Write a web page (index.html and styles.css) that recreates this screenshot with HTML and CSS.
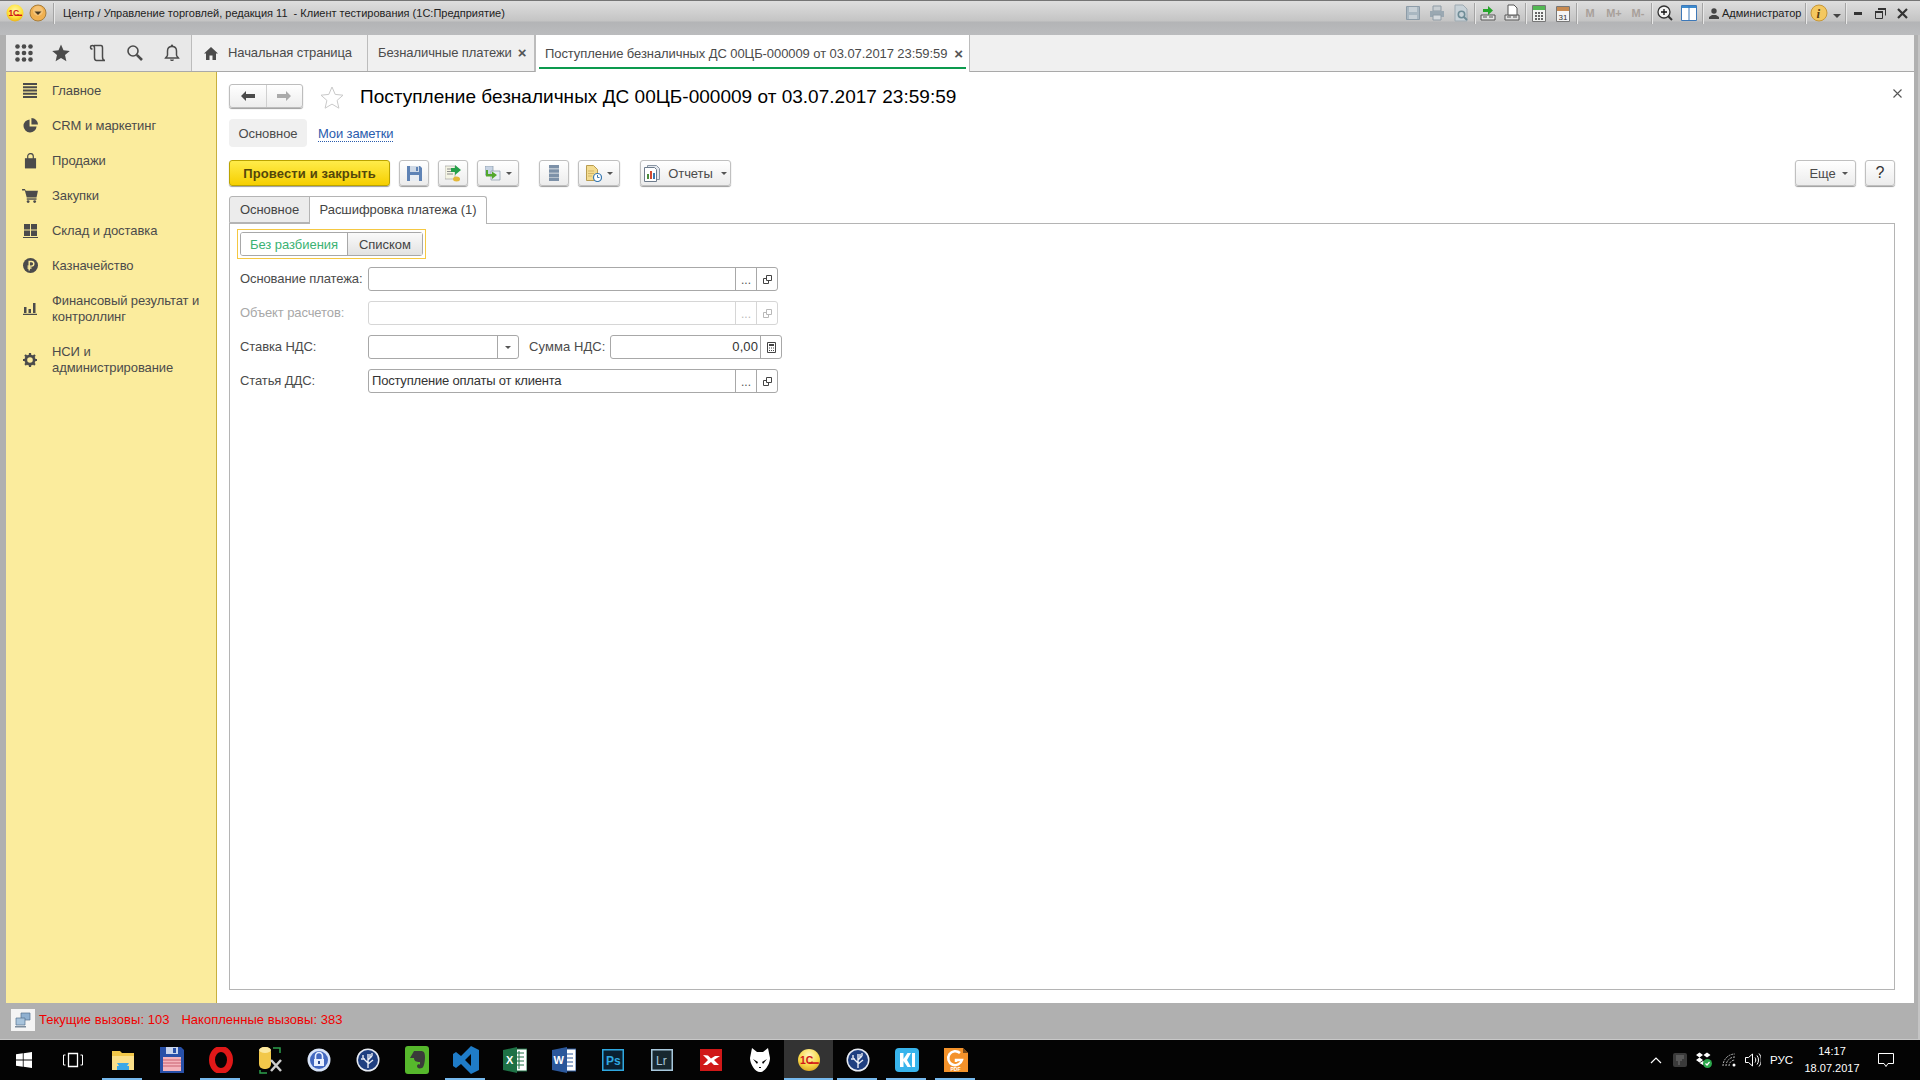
FILE: index.html
```html
<!DOCTYPE html>
<html lang="ru">
<head>
<meta charset="utf-8">
<title>Поступление безналичных ДС</title>
<link rel="stylesheet" href="styles.css">
</head>
<body>
<div class="app">
  <div class="window">
    <header class="titlebar">
      <div class="tb-left">
        <svg class="logo" width="18" height="18" viewBox="0 0 18 18"><defs><radialGradient id="lg" cx=".5" cy=".35" r=".7"><stop offset="0" stop-color="#fff7a8"/><stop offset=".6" stop-color="#ffe23a"/><stop offset="1" stop-color="#e8a810"/></radialGradient></defs><circle cx="9" cy="9" r="8.5" fill="url(#lg)"/><text x="2.4" y="12.2" class="logo-t">1С</text><rect x="9" y="10.6" width="7" height="1.4" fill="#d01818"/></svg>
        <svg class="menu-btn" width="18" height="18" viewBox="0 0 18 18"><circle cx="9" cy="9" r="8" fill="#f0b050" stroke="#a87e3c"/><circle cx="9" cy="7" r="5" fill="#f8d090" opacity=".6"/><path d="M5.5 7.5h7L9 11z" fill="#4a3a20"/></svg>
        <i class="tsep first"></i>
        <span class="win-title">Центр / Управление торговлей, редакция 11  - Клиент тестирования (1С:Предприятие)</span>
      </div>
      <div class="tb-right">
        <span class="ti"><svg width="16" height="16" viewBox="0 0 16 16"><path d="M1.500 1.500h13v13h-13z" fill="#a9b7c1" stroke="#8d9ca8"/><path d="M4 2h8v5H4zM4 10h8v4H4z" fill="#c8d0d6"/></svg></span>
        <span class="ti"><svg width="16" height="16" viewBox="0 0 16 16"><path d="M4 1h8v5H4z" fill="#c8ced2" stroke="#8f9ca6"/><path d="M1 6h14v6H1z" fill="#9aa8b2"/><path d="M4 10h8v5H4z" fill="#d5dade" stroke="#8f9ca6"/></svg></span>
        <span class="ti"><svg width="16" height="18" viewBox="0 0 16 18"><path d="M2 1h8l4 4v12H2z" fill="#c8d2d8" stroke="#9eaab2"/><circle cx="8.500" cy="10.500" r="3.200" fill="none" stroke="#6e8c96" stroke-width="1.600"/><path d="M11 13l3 3" stroke="#6e8c96" stroke-width="2"/></svg></span>
        <i class="tsep"></i>
        <span class="ti"><svg width="16" height="18" viewBox="0 0 16 18"><path d="M1 11h14v5H1z" fill="#e4e4e4" stroke="#555"/><path d="M3 13h4M9 13h4" stroke="#555"/><path d="M3 5h5V2l5 4.500L8 11V8H3z" fill="#27a52c"/></svg></span>
        <span class="ti"><svg width="16" height="18" viewBox="0 0 16 18"><path d="M1 11h14v5H1z" fill="#e4e4e4" stroke="#555"/><path d="M3 13h4M9 13h4" stroke="#555"/><path d="M4 1h6l3 3v7H4z" fill="#fff" stroke="#555"/></svg></span>
        <i class="tsep"></i>
        <span class="ti"><svg width="14" height="17" viewBox="0 0 14 17"><path d="M.5.500h13v16H.5z" fill="#f2f4f2" stroke="#777"/><path d="M1 1h12v4H1z" fill="#54b854"/><path d="M3 7h2v2H3zM6 7h2v2H6zM9 7h2v2H9zM3 10h2v2H3zM6 10h2v2H6zM9 10h2v2H9zM3 13h2v2H3zM6 13h2v2H6zM9 13h2v2H9z" fill="#666"/></svg></span>
        <span class="ti"><svg width="14" height="17" viewBox="0 0 14 17"><path d="M.5 1.500h13v15H.5z" fill="#f4f4f4" stroke="#777"/><path d="M1 2h12v4H1z" fill="#c88a50"/><text x="2.500" y="14.500" class="cal-t">31</text></svg></span>
        <i class="tsep"></i>
        <span class="ti m">M</span><span class="ti m">M+</span><span class="ti m">M-</span>
        <i class="tsep"></i>
        <span class="ti"><svg width="16" height="16" viewBox="0 0 16 16"><circle cx="7" cy="7" r="6" fill="#f4f4f4" stroke="#333" stroke-width="1.300"/><path d="M4 7h6M7 4v6" stroke="#111" stroke-width="1.300"/><path d="M11 11l4 4" stroke="#333" stroke-width="2"/></svg></span>
        <span class="ti"><svg width="16" height="16" viewBox="0 0 16 16"><path d="M.5.500h15v15H.5z" fill="#fff" stroke="#3d78b8"/><path d="M1 1h14v2H1z" fill="#3d8ccf"/><path d="M8 1v14" stroke="#3d78b8"/></svg></span>
        <i class="tsep gap"></i>
        <span class="user"><svg width="10" height="11" viewBox="0 0 10 11"><circle cx="5" cy="3" r="2.700" fill="#444"/><path d="M0 11V9l3-2h4l3 2v2z" fill="#444"/></svg>Администратор</span>
        <i class="tsep"></i>
        <span class="ti"><svg width="18" height="18" viewBox="0 0 18 18"><circle cx="9" cy="9" r="8" fill="#f4c860" stroke="#c89838"/><text x="6.500" y="14" class="info-t">i</text></svg></span>
        <svg class="tdrop" width="8" height="4" viewBox="0 0 8 4"><path d="M0 0h8L4 4z" fill="#444"/></svg>
        <i class="tsep short"></i>
        <span class="wb"><svg width="8" height="3" viewBox="0 0 8 3"><path d="M0 0h8v3H0z" fill="#333"/></svg></span>
        <span class="wb"><svg width="11" height="11" viewBox="0 0 11 11"><path d="M3 1h7.500v6.500M.500 3.500h7v7h-7z" fill="none" stroke="#333"/><path d="M3 0h8v2H3zM0 3h8v2H0z" fill="#333"/></svg></span>
        <span class="wb"><svg width="11" height="11" viewBox="0 0 11 11"><path d="M1 1l9 9M10 1l-9 9" stroke="#333" stroke-width="2.200"/></svg></span>
      </div>
    </header>

    <div class="frame">
      <nav class="tabsbar">
        <div class="tools">
          <svg class="t-grid" width="18" height="18" viewBox="0 0 18 18" fill="#4b4b4b"><circle cx="2.500" cy="2.500" r="2.300"/><circle cx="9" cy="2.500" r="2.300"/><circle cx="15.500" cy="2.500" r="2.300"/><circle cx="2.500" cy="9" r="2.300"/><circle cx="9" cy="9" r="2.300"/><circle cx="15.500" cy="9" r="2.300"/><circle cx="2.500" cy="15.500" r="2.300"/><circle cx="9" cy="15.500" r="2.300"/><circle cx="15.500" cy="15.500" r="2.300"/></svg>
          <svg width="18" height="18" viewBox="0 0 18 18"><path d="M9 .5l2.500 5.800 6.300.6-4.800 4.200 1.400 6.200L9 14l-5.400 3.300L5 11.100.2 6.900l6.300-.6z" fill="#4b4b4b"/></svg>
          <svg width="18" height="18" viewBox="0 0 18 18"><path d="M5 1.500h7c1.500 0 1.500 1 1.500 2.500v9c0 1.500.7 3.500 2.500 3.500H7.500C6 16.500 5.500 15 5.500 13.500V4C5.500 2.500 5 1.500 3.500 1.500 2 1.500 1.500 2.500 1.500 3.200 1.500 4 2.500 5 3.500 5" fill="none" stroke="#4b4b4b" stroke-width="1.500"/></svg>
          <svg width="18" height="18" viewBox="0 0 18 18"><circle cx="7" cy="7" r="5" fill="none" stroke="#4b4b4b" stroke-width="1.600"/><path d="M10.800 10.800l5.200 5.200" stroke="#4b4b4b" stroke-width="2.600"/></svg>
          <svg width="18" height="18" viewBox="0 0 18 18"><path d="M9 2.500c-3 0-4.500 2-4.500 4.500v4c0 1.500-1.500 2-2 3h13c-.5-1-2-1.500-2-3V7c0-2.500-1.500-4.500-4.500-4.500z" fill="none" stroke="#4b4b4b" stroke-width="1.500"/><path d="M7 15.500c.3 2 3.700 2 4 0z" fill="#4b4b4b"/><circle cx="9" cy="1.800" r="1.200" fill="#4b4b4b"/></svg>
        </div>
        <div class="tab home"><svg width="14" height="13" viewBox="0 0 14 13"><path d="M7 0l7 6.500h-2V13H8.500V8.500h-3V13H2V6.500H0z" fill="#4b4b4b"/></svg><span>Начальная страница</span></div>
        <div class="tab second"><span>Безналичные платежи</span><b class="x">×</b></div>
        <div class="tab active"><span>Поступление безналичных ДС 00ЦБ-000009 от 03.07.2017 23:59:59</span><b class="x">×</b></div>
      </nav>

      <div class="main">
        <aside class="sidebar">
          <a class="side"><svg width="14" height="15" viewBox="0 0 14 15" fill="#4b4b4b"><path d="M0 0h14v2H0zM0 3.200h14v2H0zM0 6.500h14v2H0zM0 9.800h14v2H0zM0 13h14v2H0z"/></svg><span>Главное</span></a>
          <a class="side"><svg width="15" height="15" viewBox="0 0 16 16" fill="#4b4b4b"><path d="M7 1.500v7.500h7.500A7 7 0 1 1 7 1.500z"/><path d="M9 0a7 7 0 0 1 7 7H9z"/></svg><span>CRM и маркетинг</span></a>
          <a class="side"><svg width="13" height="16" viewBox="0 0 14 16"><path d="M1 5h12v11H1z" fill="#4b4b4b"/><path d="M4 8V3a3 3 0 0 1 6 0v5" fill="none" stroke="#4b4b4b" stroke-width="1.300"/></svg><span>Продажи</span></a>
          <a class="side"><svg width="16" height="14" viewBox="0 0 17 15" fill="#4b4b4b"><path d="M0 0h3l1 2h13l-1.500 7H5L3 1.500H0z"/><path d="M5 10h10.500v1.500H5z"/><circle cx="6.500" cy="13.500" r="1.500"/><circle cx="13.500" cy="13.500" r="1.500"/></svg><span>Закупки</span></a>
          <a class="side"><svg width="15" height="14" viewBox="0 0 15 14" fill="#4b4b4b"><path d="M1 0h6v5.500H1zM8 0h6v5.500H8zM1 6.500h6V12H1zM8 6.500h6V12H8zM0 13h15v1H0z"/></svg><span>Склад и доставка</span></a>
          <a class="side"><svg width="15" height="15" viewBox="0 0 15 15"><circle cx="7.500" cy="7.500" r="7.500" fill="#4b4b4b"/><path d="M6.200 12.500V3.500h2.300a2.200 2.200 0 0 1 0 4.600H4.500M4.500 10h4" fill="none" stroke="#fbec9d" stroke-width="1.400"/></svg><span>Казначейство</span></a>
          <a class="side tall"><svg width="14" height="13" viewBox="0 0 14 13" fill="#4b4b4b"><path d="M0 11.800h14V13H0zM1 5h2.500v6H1zM5.500 7H8v4H5.500zM10 1h2.500v10H10z"/></svg><span>Финансовый результат и контроллинг</span></a>
          <a class="side tall"><svg width="14" height="14" viewBox="0 0 14 14"><circle cx="7" cy="7" r="4.200" fill="none" stroke="#4b4b4b" stroke-width="2.800"/><path d="M7 0v14M0 7h14M2 2l10 10M12 2L2 12" stroke="#4b4b4b" stroke-width="2.200" stroke-dasharray="2.200 9.600"/></svg><span>НСИ и администрирование</span></a>
        </aside>

        <main class="content">
          <div class="head">
            <div class="nav">
              <span class="nav-b"><svg width="14" height="10" viewBox="0 0 14 10"><path d="M0 5l5-5v3h9v4H5v3z" fill="#4b4b4b"/></svg></span>
              <span class="nav-b"><svg width="14" height="10" viewBox="0 0 14 10"><path d="M14 5L9 0v3H0v4h9v3z" fill="#aaa"/></svg></span>
            </div>
            <svg class="star" width="24" height="23" viewBox="0 0 24 23"><path d="M12 1l3.200 7.400 7.800.8-5.900 5.200 1.800 7.800L12 18.100l-6.900 4.100 1.800-7.800L1 9.200l7.800-.8z" fill="#fff" stroke="#c9c9c9"/></svg>
            <h1 class="doc-title">Поступление безналичных ДС 00ЦБ-000009 от 03.07.2017 23:59:59</h1>
            <svg class="close" width="9" height="9" viewBox="0 0 9 9"><path d="M.5.500l8 8M8.500.500l-8 8" stroke="#555" stroke-width="1.100"/></svg>
          </div>

          <div class="subnav">
            <span class="pill">Основное</span>
            <a class="note">Мои заметки</a>
          </div>

          <div class="toolbar">
            <button class="btn primary">Провести и закрыть</button>
            <button class="btn ic"><svg width="15" height="15" viewBox="0 0 15 15"><path d="M0 0h13l2 2v13H0z" fill="#5f83b5"/><path d="M3 0h9v6H3z" fill="#cfd9e6"/><path d="M3 9h9v6H3z" fill="#e9edf2"/><path d="M9 1h2v4H9z" fill="#5f83b5"/></svg></button>
            <button class="btn ic"><svg width="17" height="17" viewBox="0 0 17 17"><path d="M0 1h10v13H0z" fill="#f4f4e4" stroke="#999" stroke-width=".6"/><path d="M2 4h6M2 6.500h6M2 9h6" stroke="#8a8a8a"/><ellipse cx="11.500" cy="14" rx="3.500" ry="2.500" fill="#e4b838"/><path d="M6 3h4V0l6 5-6 5V7H6z" fill="#27a04a"/></svg></button>
            <button class="btn ic drop"><svg width="16" height="15" viewBox="0 0 16 15"><path d="M0 0h8v9H0z" fill="#c8d4e4" stroke="#8898a8" stroke-width=".7"/><path d="M6 5h9v9H6z" fill="#e8eef4" stroke="#8898a8" stroke-width=".7"/><path d="M3 4v4h4V5.500L12 9l-5 4v-2.500H1V4z" fill="#52a82c"/></svg><i class="caret"></i></button>
            <button class="btn ic wide-gap"><svg width="10" height="16" viewBox="0 0 10 16"><path d="M0 0h10v3.500H0zM0 4.200h10v3.500H0zM0 8.400h10v3.500H0zM0 12.500h10V16H0z" fill="#7d91a8"/></svg></button>
            <button class="btn ic drop"><svg width="16" height="17" viewBox="0 0 16 17"><path d="M.500.500h7l4 4v11H.500z" fill="#f4dc90" stroke="#b89c50"/><path d="M2.500 6h6M2.500 8.500h6M2.500 11h4" stroke="#b09040" stroke-dasharray="1 1"/><circle cx="11.500" cy="12.500" r="4" fill="#fff" stroke="#3878b0" stroke-width="1.200"/><path d="M11.500 10v2.500h2" stroke="#3878b0" fill="none"/></svg><i class="caret"></i></button>
            <button class="btn rep"><svg width="16" height="17" viewBox="0 0 16 17"><path d="M3.500.500h9l3 3v11h-12z" fill="#e4e8ee" stroke="#8a96a4"/><path d="M.500 2.500h10l2 2v12h-12z" fill="#fff" stroke="#6e7c8c"/><path d="M3 9h2v5H3z" fill="#4a8c3c"/><path d="M6 6h2v8H6z" fill="#d04a30"/><path d="M9 8h2v6H9z" fill="#3878b0"/></svg><span>Отчеты</span><i class="caret"></i></button>
            <div class="tool-end">
              <button class="btn more"><span>Еще</span><i class="caret"></i></button>
              <button class="btn help">?</button>
            </div>
          </div>

          <div class="ftabs">
            <span class="ftab">Основное</span>
            <span class="ftab on">Расшифровка платежа (1)</span>
          </div>

          <section class="panel">
            <div class="focus">
              <div class="seg">
                <span class="seg-on">Без разбиения</span>
                <span class="seg-off">Списком</span>
              </div>
            </div>
            <div class="rows">
              <div class="row">
                <label class="lbl">Основание платежа:</label>
                <div class="field w-long"><span class="val"></span><span class="fb dots">...</span><span class="fb"><svg width="9" height="9" viewBox="0 0 9 9"><path d="M3.500.500h5v5h-5zM3.500 3.500h-3v5h5v-3" fill="none" stroke="#444"/></svg></span></div>
              </div>
              <div class="row off">
                <label class="lbl">Объект расчетов:</label>
                <div class="field w-long"><span class="val"></span><span class="fb dots">...</span><span class="fb"><svg width="9" height="9" viewBox="0 0 9 9"><path d="M3.500.500h5v5h-5zM3.500 3.500h-3v5h5v-3" fill="none" stroke="#b8b8b8"/></svg></span></div>
              </div>
              <div class="row">
                <label class="lbl">Ставка НДС:</label>
                <div class="field w-rate"><span class="val"></span><span class="fb"><i class="caret"></i></span></div>
                <label class="lbl2">Сумма НДС:</label>
                <div class="field w-sum"><span class="val num">0,00</span><span class="fb"><svg width="9" height="11" viewBox="0 0 9 11"><path d="M.500.500h8v10h-8z" fill="none" stroke="#444"/><path d="M2 2h5v2H2zM2 5.500h1v1H2zM4 5.500h1v1H4zM6 5.500h1v1H6zM2 8h1v1H2zM4 8h1v1H4zM6 8h1v1H6z" fill="#444"/></svg></span></div>
              </div>
              <div class="row">
                <label class="lbl">Статья ДДС:</label>
                <div class="field w-long"><span class="val">Поступление оплаты от клиента</span><span class="fb dots">...</span><span class="fb"><svg width="9" height="9" viewBox="0 0 9 9"><path d="M3.500.500h5v5h-5zM3.500 3.500h-3v5h5v-3" fill="none" stroke="#444"/></svg></span></div>
              </div>
            </div>
          </section>
        </main>
      </div>

      <footer class="status">
        <span class="st-ic"><svg width="16" height="16" viewBox="0 0 16 16"><path d="M6 1h9v7H6z" fill="#8fb0d0" stroke="#55708c" stroke-width=".7"/><path d="M1 6h9v7H1z" fill="#a8c4dc" stroke="#55708c" stroke-width=".7"/><path d="M0 14h11v1.500H0z" fill="#7c8c9c"/></svg></span>
        <span>Текущие вызовы: 103</span>
        <span class="st-2">Накопленные вызовы: 383</span>
      </footer>
    </div>
  </div>

  <div class="taskbar">
    <span class="tk start"><svg width="16" height="16" viewBox="0 0 16 16" fill="#fff"><path d="M0 2.300l6.800-1v6.300H0zM7.600 1.200L16 0v7.600H7.600zM0 8.400h6.800v6.300l-6.800-1zM7.600 8.400H16V16l-8.400-1.200z"/></svg></span>
    <span class="tk view"><svg width="20" height="16" viewBox="0 0 20 16" fill="none" stroke="#fff"><path d="M5.500 1.500h9v13h-9z" stroke-width="1.300"/><path d="M2.500 3H.5v10h2M17.500 3h2v10h-2"/></svg></span>
    <span class="tk lit"><svg width="24" height="22" viewBox="0 0 24 22"><path d="M1 2h8l2 2h12v17H1z" fill="#f2c84a"/><path d="M1 7h22v14H1z" fill="#fbe08a"/><path d="M6 14h12l-2 3h2v4H6v-4h2z" fill="#3ba8e8"/></svg></span>
    <span class="tk"><svg width="24" height="26" viewBox="0 0 24 26"><path d="M0 0h21l3 3v23H0z" fill="#2850a8"/><path d="M6 0h12v7H6z" fill="#c8d4ec"/><path d="M13 1h3v5h-3z" fill="#2850a8"/><path d="M3 10h18v14H3z" fill="#f4b4bc"/><path d="M3 13h18M3 16h18M3 19h18" stroke="#c86070"/></svg></span>
    <span class="tk lit"><svg width="24" height="26" viewBox="0 0 24 26"><ellipse cx="12" cy="13" rx="9" ry="11" fill="none" stroke="#e01818" stroke-width="6"/></svg></span>
    <span class="tk"><svg width="26" height="28" viewBox="0 0 26 28"><rect x="2" y="1" width="12" height="22" rx="5" fill="#f2c84a"/><ellipse cx="8" cy="4" rx="6" ry="3" fill="#fbe8a0"/><path d="M16 2h7v5M3 24v3h7" fill="none" stroke="#2ca04c" stroke-width="1.500"/><path d="M14 14l10 11M24 14L14 25" stroke="#ccc" stroke-width="2.500"/></svg></span>
    <span class="tk"><svg width="24" height="24" viewBox="0 0 24 24"><circle cx="12" cy="12" r="11.500" fill="#d8e4f8"/><circle cx="12" cy="12" r="9" fill="#4268c0"/><path d="M8.500 11V8a3.500 3.500 0 0 1 7 0v3" fill="none" stroke="#e8f0ff" stroke-width="1.600"/><path d="M7 11h10v7H7z" fill="#e8f0ff"/><path d="M11 13h2v3h-2z" fill="#2c4a90"/></svg></span>
    <span class="tk"><svg width="24" height="24" viewBox="0 0 24 24"><use href="#tree"/></svg></span>
    <span class="tk"><svg width="24" height="28" viewBox="0 0 24 28"><rect width="24" height="28" rx="3" fill="#56b82c"/><path d="M9 5h7c3 0 4 2 4 6s-1 10-3 11c-3 1-5 0-5-2s3-2 3-1v-3c-4 0-6-1-6-4H5z" fill="#3a3a3a"/></svg></span>
    <span class="tk lit"><svg width="26" height="28" viewBox="0 0 26 28"><path d="M18 0l8 4v20l-8 4-10-10-5 4-3-2V8l3-2 5 4zM18 8l-6 6 6 6z" fill="#1f7cc8"/></svg></span>
    <span class="tk"><svg width="24" height="26" viewBox="0 0 24 26"><path d="M9 2h15v22H9z" fill="#fff" stroke="#1e7145"/><path d="M12 6h9M12 10h9M12 14h9M12 18h9M16 4v18" stroke="#1e7145"/><path d="M0 3l14-3v26L0 23z" fill="#1e7145"/><text x="3" y="17" class="tk-l">X</text></svg></span>
    <span class="tk"><svg width="24" height="26" viewBox="0 0 24 26"><path d="M9 2h15v22H9z" fill="#fff" stroke="#2b579a"/><path d="M14 7h7M14 11h7M14 15h7M14 19h7" stroke="#2b579a"/><path d="M0 3l15-3v26L0 23z" fill="#2b579a"/><text x="1.500" y="17" class="tk-l">W</text></svg></span>
    <span class="tk"><svg width="22" height="22" viewBox="0 0 22 22"><rect x=".75" y=".75" width="20.500" height="20.500" fill="#0a2030" stroke="#2fa8e0" stroke-width="1.500"/><text x="4" y="15.500" class="tk-ps">Ps</text></svg></span>
    <span class="tk"><svg width="22" height="22" viewBox="0 0 22 22"><rect x=".75" y=".75" width="20.500" height="20.500" fill="#182830" stroke="#a8c8dc" stroke-width="1.500"/><text x="5" y="15.500" class="tk-lr">Lr</text></svg></span>
    <span class="tk"><svg width="22" height="22" viewBox="0 0 22 22"><rect width="22" height="22" fill="#d01818"/><path d="M3 6l5 .5 3 3 4-2.500h5l-6 4 5 5h-5l-3-3-4 3H3l5-5z" fill="#fff"/></svg></span>
    <span class="tk"><svg width="20" height="24" viewBox="0 0 20 24"><path d="M2 0l5 4h6l5-4 2 10c0 6-5 14-10 14S0 16 0 10z" fill="#fff"/><path d="M3 11l5 3-1 2zM17 11l-5 3 1 2zM9 19h2v1H9z" fill="#000"/></svg></span>
    <span class="tk current"><svg width="22" height="22" viewBox="0 0 18 18"><defs><radialGradient id="lg2" cx=".5" cy=".3" r=".75"><stop offset="0" stop-color="#fff8c0"/><stop offset=".6" stop-color="#f8d848"/><stop offset="1" stop-color="#d8a020"/></radialGradient></defs><circle cx="9" cy="9" r="9" fill="url(#lg2)"/><text x="1.600" y="12.400" class="logo-t">1С</text><rect x="9" y="10.800" width="8" height="1.400" fill="#d01818"/></svg></span>
    <span class="tk lit"><svg width="24" height="24" viewBox="0 0 24 24"><use href="#tree"/></svg></span>
    <span class="tk lit"><svg width="24" height="24" viewBox="0 0 24 24"><rect width="24" height="24" rx="4" fill="#38b4ec"/><path d="M5 5h3.500v6l4-6H16l-4 7 4 7h-3.500l-4-6v6H5zM17 5h3v14h-3z" fill="#fff"/></svg></span>
    <span class="tk lit"><svg width="24" height="24" viewBox="0 0 24 24"><path d="M0 0h19l5 5v19H0z" fill="#f4922a"/><path d="M19 0l5 5h-5z" fill="#7a4a18"/><path d="M16 5a7 7 0 1 0 2 7h-6v2" fill="none" stroke="#fff" stroke-width="2.500"/><text x="6.500" y="22.500" class="tk-pdf">PDF</text></svg></span>
    <div class="tray">
      <svg class="tr-chev" width="12" height="7" viewBox="0 0 12 7"><path d="M1 6l5-5 5 5" fill="none" stroke="#fff" stroke-width="1.200"/></svg>
      <span class="tr-box"><svg width="8" height="10" viewBox="0 0 8 10"><path d="M1 0v6M3 0v10M5 0v6M7 0v4" stroke="#777"/></svg></span>
      <svg width="16" height="16" viewBox="0 0 16 16"><path d="M0 3l3.500-2.500L7 3 3.500 5.500zM7.500 3L11 .5 14.500 3 11 5.500zM0 8l3.500-2.500L7 8l-3.500 2.500zM7 13l-3.500-2L7 9l3.500 2z" fill="#fff"/><circle cx="11.500" cy="11.500" r="4.500" fill="#2ca84c"/><path d="M9.500 11.500l1.500 1.500 2.500-3" fill="none" stroke="#fff" stroke-width="1.200"/></svg>
      <svg width="15" height="14" viewBox="0 0 15 14" fill="none" stroke="#bbb"><path d="M1 13A12 12 0 0 1 13 1M4 13a9 9 0 0 1 9-9M7 13a6 6 0 0 1 6-6" stroke-dasharray="2 1"/><circle cx="12" cy="12" r="1.500" fill="#fff" stroke="none"/></svg>
      <svg width="16" height="14" viewBox="0 0 16 14" fill="none" stroke="#fff"><path d="M.5 4.500h3L7.500 1v12l-4-3.500h-3zM10 4.500c1 1.500 1 3.500 0 5M12 2.500c2 2.500 2 6.500 0 9M14 .5c3 3.500 3 9.500 0 13"/></svg>
      <span class="tr-lang">РУС</span>
      <span class="tr-clock"><span>14:17</span><span>18.07.2017</span></span>
      <svg class="tr-msg" width="16" height="14" viewBox="0 0 16 14"><path d="M.5.500h15v10H10l-2 3-2-3H.5z" fill="none" stroke="#fff"/></svg>
    </div>
  </div>
</div>
<svg class="defs" width="0" height="0"><defs><g id="tree"><circle cx="12" cy="12" r="11.500" fill="#e8ecf4"/><circle cx="12" cy="12" r="10" fill="#1f3f80"/><path d="M12 20V6M12 15L7 10M12 12l4-4M12 16l5-4M7 10V7M9 11H5M16 8V5M14 10V6" fill="none" stroke="#e8ecf4" stroke-width="1.400"/></g></defs></svg>
</body>
</html>
```

FILE: styles.css
```css
* { box-sizing: border-box; }
html, body { margin: 0; padding: 0; width: 1920px; height: 1080px; overflow: hidden; }
body { font: 13px/16px "Liberation Sans", Arial, sans-serif; color: #4b4b4b; background: #000; }
.defs { display: block; }
.app { width: 1920px; height: 1080px; display: flex; flex-direction: column; }
.window { height: 1040px; display: flex; flex-direction: column; background: #b0b0b0; }

/* title bar */
.titlebar {
  height: 35px; flex: none; display: flex; justify-content: space-between;
  border-top: 1px solid #757575;
  background: linear-gradient(#dedede 0, #c4c4c4 20px, #b3b4b6 21px, #bbbcbe 34px);
}
.tb-left { display: flex; align-items: center; height: 24px; padding-left: 6px; }
.menu-btn { margin-left: 5px; }
.logo-t { font: bold 8.5px "Liberation Sans", sans-serif; fill: #d01818; }
.tsep { display: block; width: 1px; height: 21px; background: #a4a4a4; box-shadow: 1px 0 0 #e8e8e8; margin: 0 1px 0 1px; }
.tsep.first { margin: 0 9px 0 6px; }
.tsep.gap { margin: 0 1px 0 1px; }
.tsep.short { margin: 0 1px 0 0; }
.win-title { white-space: pre; font-size: 11px; letter-spacing: 0; color: #222; }
.tb-right { display: flex; align-items: center; height: 24px; padding-right: 7px; }
.ti { width: 24px; height: 22px; display: flex; align-items: center; justify-content: center; }
.ti.m { font-size: 11px; font-weight: bold; color: #a8a09a; }
.cal-t { font: 8px "Liberation Sans", sans-serif; fill: #333; }
.info-t { font: italic bold 13px "Liberation Serif", serif; fill: #5a3c10; }
.user { display: flex; align-items: center; gap: 3px; width: 100px; padding-left: 5px; font-size: 11px; color: #222; white-space: nowrap; }
.tdrop { margin: 6px 4px 0 2px; }
.wb { width: 22px; display: flex; justify-content: center; }

/* frame */
.frame { flex: 1; min-height: 0; display: flex; flex-direction: column; padding: 0 6px 5px 6px; box-shadow: inset 0 -1px 0 #c8c8c8, inset -2px 0 0 #c4c4c4; }
.tabsbar { height: 37px; flex: none; display: flex; background: #f0f0f0; border-bottom: 1px solid #a9a9a9; }
.tools { width: 186px; display: flex; align-items: center; gap: 19px; padding-left: 9px; background: #e8e8e8; border-right: 1px solid #bcbcbc; }
.tab { display: flex; align-items: center; border-right: 1px solid #bcbcbc; font-size: 13px; letter-spacing: -.08px; white-space: nowrap; color: #4b4b4b; }
.tab.home { width: 176px; padding-left: 12px; gap: 10px; letter-spacing: -.1px; }
.tab.second { width: 167px; padding-left: 10px; }
.tab.second .x { margin-left: 6px; }
.tab.active { width: 435px; padding-left: 9px; background: #fff; border-left: 1px solid #bcbcbc; margin-left: 0; position: relative; margin-bottom: -1px; }
.tab.active::after { content: ""; position: absolute; left: 3px; right: 3px; bottom: 3px; height: 2px; background: #0c9a4e; }
.tab.active .x { margin-left: 7px; }
.x { font-size: 15px; font-weight: bold; color: #555; line-height: 14px; }

.main { flex: 1; min-height: 0; display: flex; }

/* sidebar */
.sidebar { width: 211px; flex: none; background: #fbec9d; border-right: 1px solid #c8b03e; padding-top: 1px; }
.side { display: grid; grid-template-columns: 46px 158px; align-items: center; height: 35px; color: #4b4b4b; letter-spacing: -.08px; }
.side.tall { height: 51px; }
.side svg { justify-self: center; margin-left: 2px; }

/* content */
.content { flex: 1; min-width: 0; display: flex; flex-direction: column; background: #fff; padding: 12px 19px 13px 12px; }
.head { height: 24px; flex: none; display: flex; align-items: center; }
.nav { width: 74px; height: 24px; display: flex; border: 1px solid #bdbdbd; border-radius: 3px; background: linear-gradient(#fff, #ededed); box-shadow: 0 1px 1px #9c9c9c; }
.nav-b { flex: 1; display: flex; align-items: center; justify-content: center; }
.nav-b + .nav-b { border-left: 1px solid #d0d0d0; }
.star { margin-left: 17px; margin-top: 2px; }
.doc-title { margin: 2px 0 0 16px; font-size: 19px; line-height: 24px; font-weight: normal; color: #000; white-space: nowrap; letter-spacing: .02px; }
.close { margin-left: auto; margin-right: -7px; margin-top: -6px; }

.subnav { margin-top: 11px; height: 28px; flex: none; display: flex; align-items: center; }
.pill { width: 78px; height: 28px; display: flex; align-items: center; justify-content: center; padding-top: 1px; background: #f0f0f0; border-radius: 4px; letter-spacing: -.06px; }
.note { margin: 2px 0 0 11px; color: #2a5cad; border-bottom: 1px dotted #2a5cad; line-height: 15px; letter-spacing: -.13px; }

.toolbar { margin-top: 13px; height: 26px; flex: none; display: flex; }
.btn {
  height: 26px; padding: 0; display: flex; align-items: center; justify-content: center;
  font: 13px "Liberation Sans", sans-serif; color: #4b4b4b; letter-spacing: -.1px;
  border: 1px solid #c0c0c0; border-radius: 3px; background: linear-gradient(#fff, #ececec);
  box-shadow: 0 1px 1px #9c9c9c; margin-left: 9px;
}
.primary { width: 161px; margin-left: 0; font-weight: bold; color: #54470a; background: linear-gradient(#ffec4a, #f6cf00); border-color: #bba400; letter-spacing: .12px; }
.ic { width: 30px; }
.drop { width: 42px; gap: 5px; }
.wide-gap { margin-left: 20px; }
.rep { width: 91px; gap: 8px; margin-left: 20px; }
.tool-end { margin-left: auto; display: flex; }
.more { width: 61px; gap: 6px; padding-left: 6px; }
.help { width: 30px; font-size: 16px; color: #333; }
.caret { display: block; width: 0; height: 0; border: 3px solid transparent; border-top-color: #555; border-bottom-width: 0; border-top-width: 3px; }

.ftabs { margin-top: 10px; height: 28px; flex: none; display: flex; position: relative; z-index: 1; }
.ftab { height: 27px; width: 81px; display: flex; align-items: center; justify-content: center; background: #ececec; border: 1px solid #b4b4b4; border-radius: 3px 0 0 0; letter-spacing: -.05px; color: #444; }
.ftab.on { height: 28px; width: 178px; margin-left: -1px; padding-bottom: 1px; background: #fff; border-bottom: 0; border-radius: 0 3px 0 0; letter-spacing: -.07px; }

.panel { flex: 1; min-height: 0; margin-top: -1px; border: 1px solid #b4b4b4; padding: 5px 0 0 7px; }
.focus { width: 189px; height: 30px; border: 1px solid #f5c842; padding: 2px; }
.seg { height: 24px; display: flex; border: 1px solid #a8a8a8; border-radius: 3px; letter-spacing: -.03px; }
.seg-on { width: 106px; display: flex; align-items: center; justify-content: center; padding-top: 1px; color: #3bb273; background: #fff; border-radius: 2px 0 0 2px; }
.seg-off { flex: 1; display: flex; align-items: center; justify-content: center; padding-top: 1px; color: #444; background: linear-gradient(#fafafa, #e2e2e2); border-left: 1px solid #a8a8a8; }

.rows { margin: 8px 0 0 3px; display: flex; flex-direction: column; gap: 10px; }
.row { height: 24px; display: flex; align-items: center; }
.lbl { width: 128px; flex: none; letter-spacing: -.1px; white-space: nowrap; }
.lbl2 { width: 81px; margin-left: 10px; flex: none; letter-spacing: .08px; white-space: nowrap; }
.field { height: 24px; display: flex; border: 1px solid #a8a8a8; border-radius: 3px; background: #fff; }
.w-long { width: 410px; }
.w-rate { width: 151px; }
.w-sum { width: 172px; }
.val { flex: 1; min-width: 0; padding-left: 3px; display: flex; align-items: center; letter-spacing: -.2px; color: #333; white-space: nowrap; }
.num { justify-content: flex-end; padding: 0 2px 0 0; letter-spacing: .1px; }
.fb { width: 21px; flex: none; display: flex; align-items: center; justify-content: center; border-left: 1px solid #a8a8a8; color: #555; }
.dots { align-items: flex-end; line-height: 16px; padding-bottom: 2px; font-size: 12px; }
.off .lbl { color: #a8a8a8; }
.off .field { border-color: #d6d6d6; }
.off .fb { border-left-color: #d6d6d6; color: #bbb; }

/* status */
.status { height: 32px; flex: none; display: flex; align-items: center; padding: 1px 0 0 5px; color: #f00000; letter-spacing: .02px; }
.st-ic { width: 24px; height: 22px; display: flex; align-items: center; justify-content: center; background: #f4f4f4; margin-right: 4px; }
.st-2 { margin-left: 12px; }

/* taskbar */
.taskbar { height: 40px; flex: none; display: flex; background: #040404; }
.tk { width: 49px; height: 40px; flex: none; display: flex; align-items: center; justify-content: center; position: relative; }
.start { width: 48px; }
.view { width: 50px; }
.tk.lit::after, .tk.current::after { content: ""; position: absolute; left: 4px; right: 5px; bottom: 0; height: 2px; background: #76b9ed; }
.tk.current { background: #333; }
.tk.current::after { left: 0; right: 0; }
.tk-l { font: bold 11px "Liberation Sans", sans-serif; fill: #fff; }
.tk-ps { font: bold 12px "Liberation Sans", sans-serif; fill: #2fa8e0; }
.tk-lr { font: 12px "Liberation Sans", sans-serif; fill: #a8c8dc; }
.tk-pdf { font: bold 5px "Liberation Sans", sans-serif; fill: #fff; }
.tray { margin-left: auto; display: flex; align-items: center; color: #fff; padding-right: 26px; }
.tr-chev { margin-right: 11px; }
.tr-box { width: 14px; height: 14px; display: flex; align-items: center; justify-content: center; background: #3a3a3a; border-radius: 2px; margin-right: 9px; }
.tray > svg:nth-of-type(2) { margin-right: 10px; }
.tray > svg:nth-of-type(3) { margin-right: 8px; }
.tr-lang { font-size: 11.5px; margin-left: 9px; width: 28px; }
.tr-clock { width: 60px; margin: 0 5px 0 4px; display: flex; flex-direction: column; align-items: center; font-size: 11px; line-height: 17px; }
.tr-msg { margin-left: 11px; }
```
